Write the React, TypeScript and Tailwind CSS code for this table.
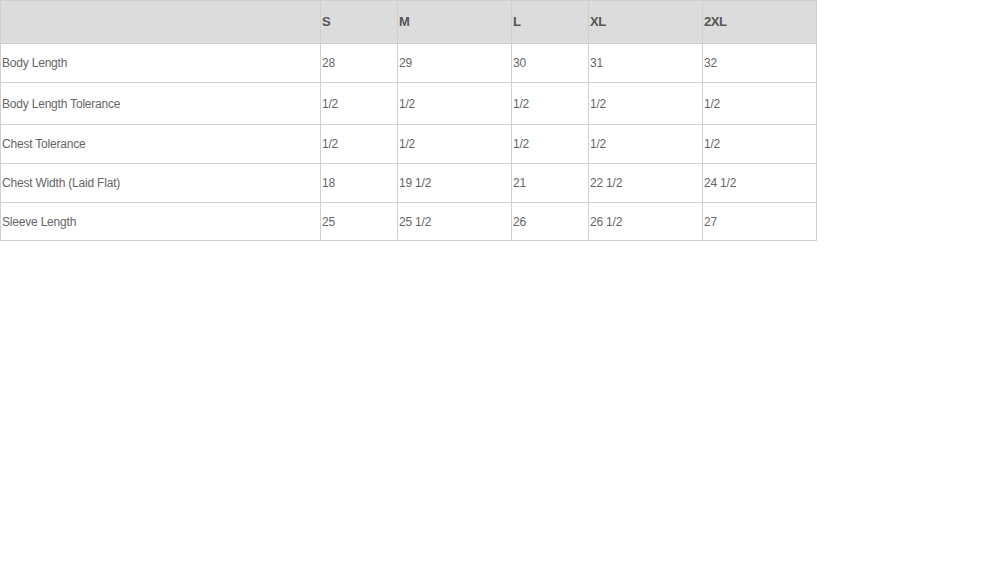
const sizes = ["S", "M", "L", "XL", "2XL"];

const rows: {label: string; values: string[]; h: string}[] = [
    {label: "Body Length", values: ["28", "29", "30", "31", "32"], h: "h-[39px]"},
    {label: "Body Length Tolerance", values: ["1/2", "1/2", "1/2", "1/2", "1/2"], h: "h-[42px]"},
    {label: "Chest Tolerance", values: ["1/2", "1/2", "1/2", "1/2", "1/2"], h: "h-[39px]"},
    {label: "Chest Width (Laid Flat)", values: ["18", "19 1/2", "21", "22 1/2", "24 1/2"], h: "h-[39px]"},
    {label: "Sleeve Length", values: ["25", "25 1/2", "26", "26 1/2", "27"], h: "h-[38px]"},
];

const App = () => {
    return (
        <div className="min-h-screen bg-white font-['Liberation_Sans',Arial,sans-serif]">
            <table className="border-collapse table-fixed w-[816px] text-[12px] tracking-[-0.2px] text-[#666]">
                <colgroup>
                    <col className="w-[320px]" />
                    <col className="w-[77px]" />
                    <col className="w-[114px]" />
                    <col className="w-[77px]" />
                    <col className="w-[114px]" />
                    <col className="w-[114px]" />
                </colgroup>
                <thead>
                    <tr className="h-[43px] bg-[#dcdcdc]">
                        <th className="border border-[#d0d0d0] p-0" />
                        {sizes.map((s) => (
                            <th key={s} className="border border-[#d0d0d0] pl-px text-left align-middle text-[13px] font-bold tracking-[-0.4px] text-[#555]">
                                {s}
                            </th>
                        ))}
                    </tr>
                </thead>
                <tbody>
                    {rows.map((row) => (
                        <tr key={row.label} className={row.h}>
                            <td className="border border-[#d0d0d0] pl-px align-middle">{row.label}</td>
                            {row.values.map((v, i) => (
                                <td key={i} className="border border-[#d0d0d0] pl-px align-middle">{v}</td>
                            ))}
                        </tr>
                    ))}
                </tbody>
            </table>
        </div>
    );
};

export default App;
